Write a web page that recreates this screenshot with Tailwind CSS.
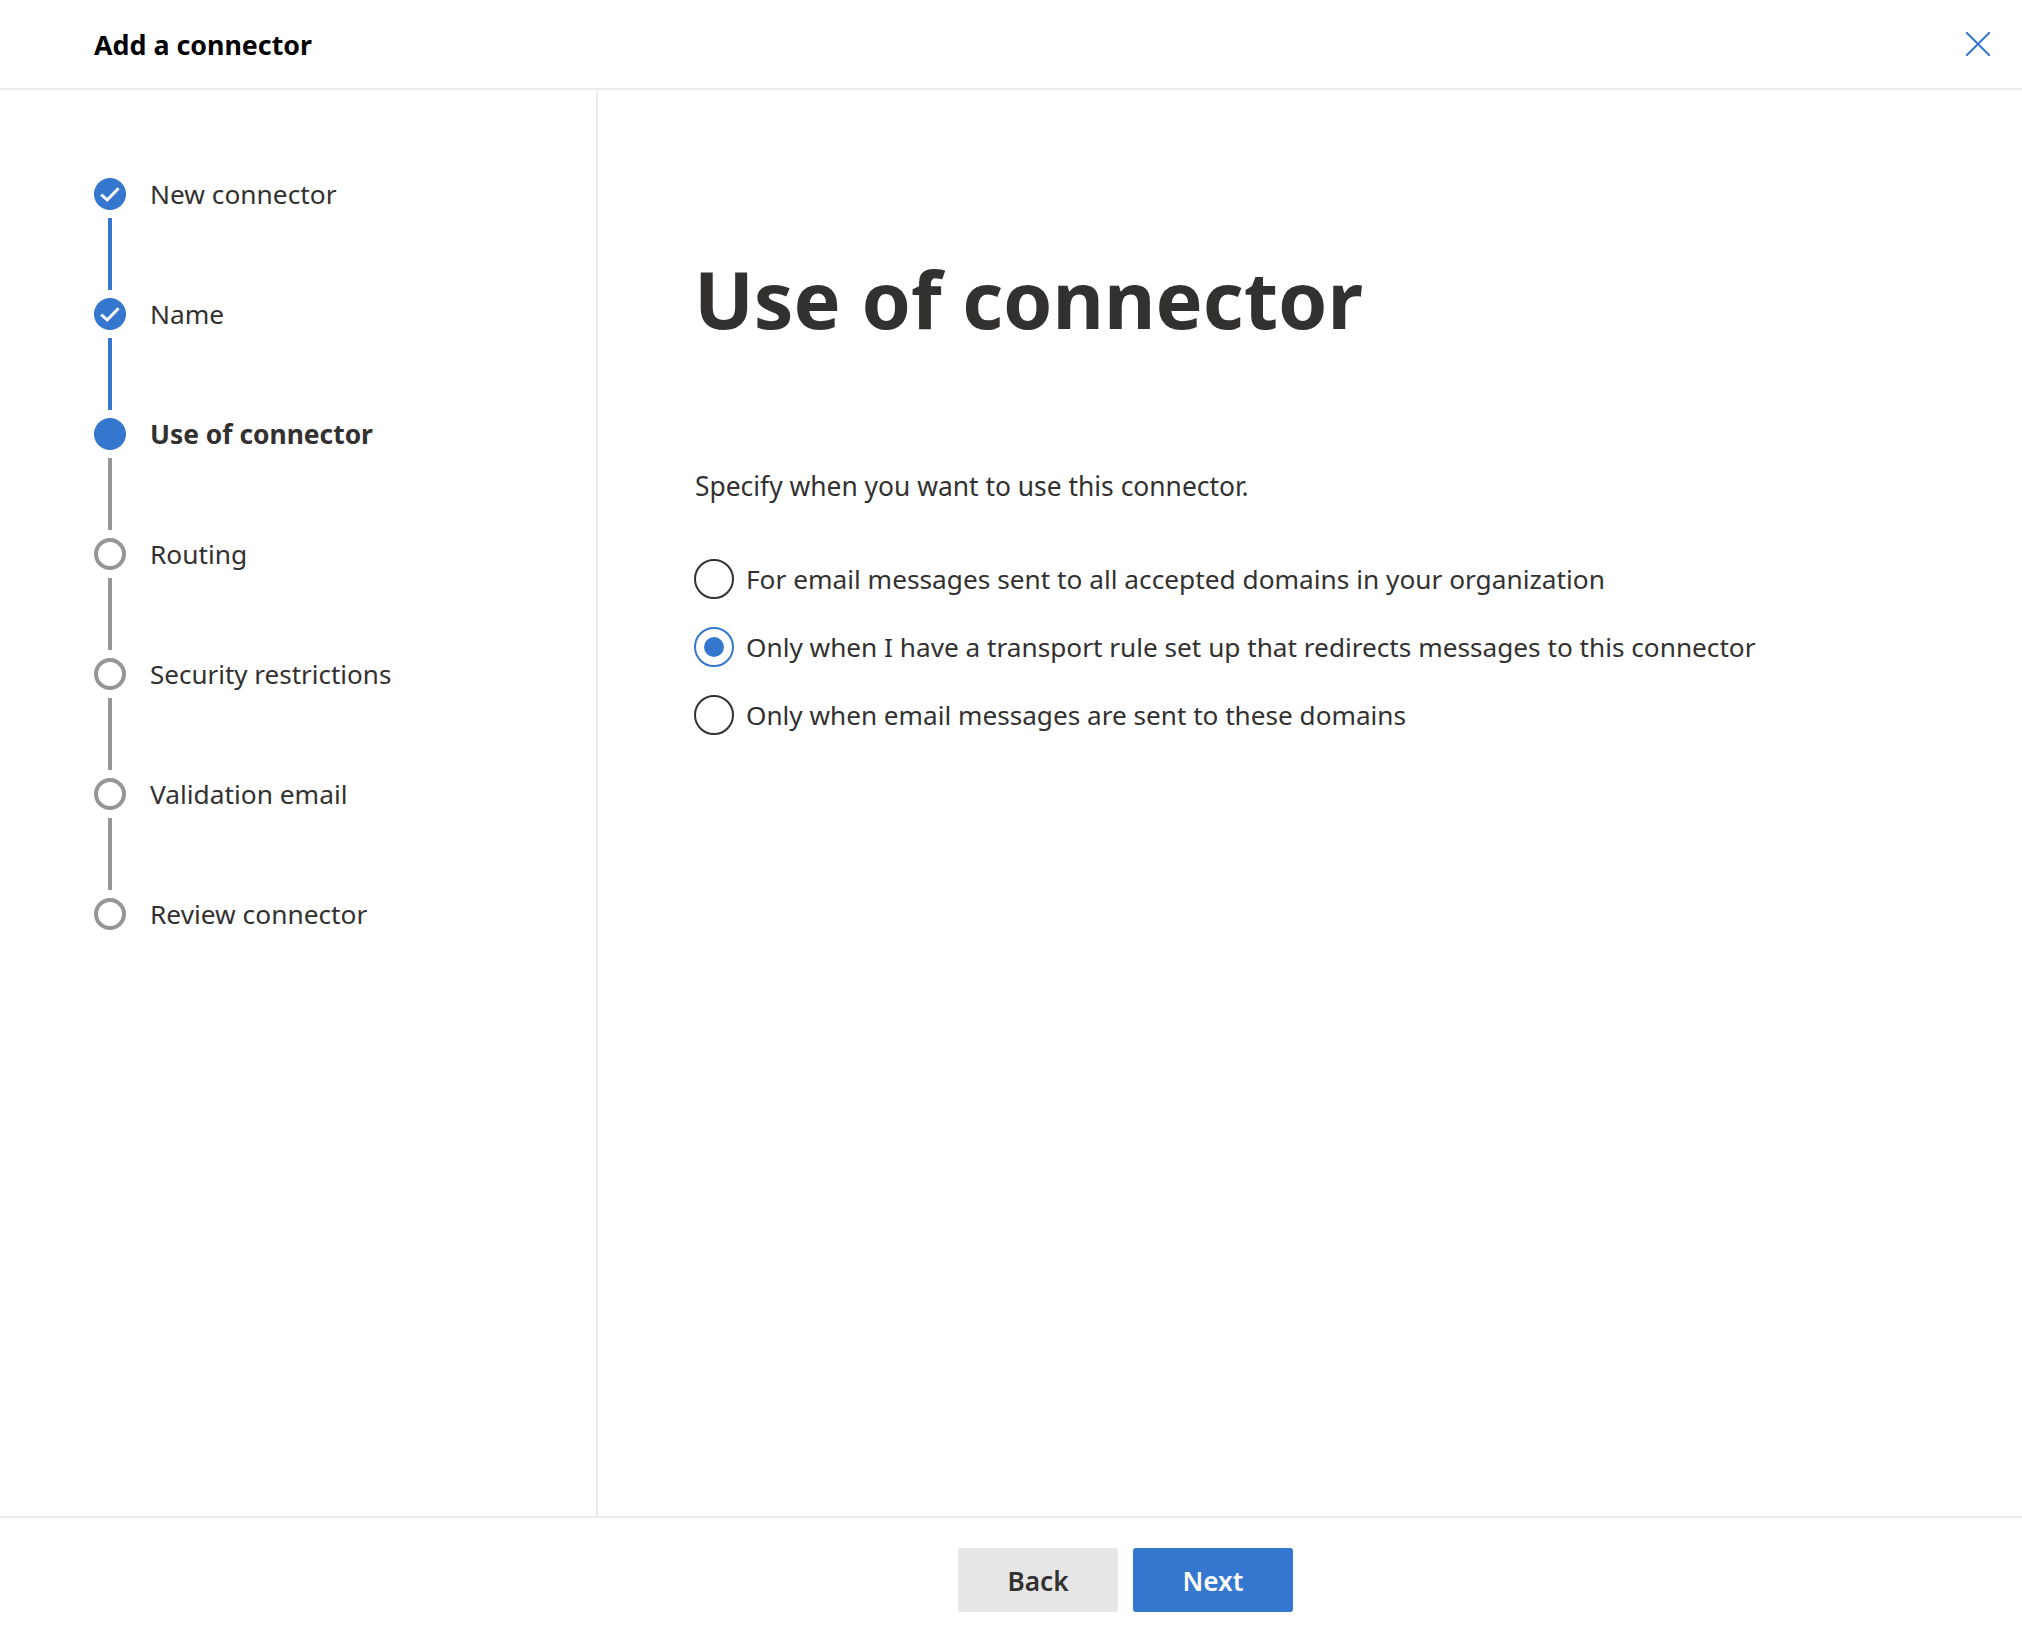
<!DOCTYPE html>
<html lang="en"><head><meta charset="utf-8"><script src="https://cdn.jsdelivr.net/npm/@tailwindcss/browser@4"></script><title>Add a connector</title></head>
<body class="m-0 bg-white">
<div class="flex flex-col w-[2022px] h-[1642px] bg-white text-[#323130] font-['Noto_Sans',sans-serif] overflow-hidden">
  <header class="flex items-center justify-between h-[90px] shrink-0 border-b-2 border-[#edebe9] pl-[94px] pr-[32px]">
    <h1 class="text-[26.8px] leading-[36px] font-bold text-black pt-[2px]">Add a connector</h1>
    <button class="block w-[24px] h-[24px]" aria-label="Close"><svg viewBox="0 0 24 24" class="w-[24px] h-[24px]" fill="none" stroke="#3576ce" stroke-width="2"><path d="M0 0L24 24M24 0L0 24"/></svg></button>
  </header>
  <div class="flex flex-1 min-h-0">
    <nav class="w-[598px] shrink-0 border-r-2 border-[#edebe9] pt-[88px] pl-[94px]">
      <ol class="flex flex-col">
        <li class="flex items-center gap-[24px] h-[32px]"><span class="w-[32px] h-[32px] rounded-full bg-[#3576ce] flex items-center justify-center"><svg viewBox="0 0 32 32" class="w-[32px] h-[32px]" fill="none" stroke="#fff" stroke-width="3"><path d="M7.2 16.6L13.2 22L24.6 10.2"/></svg></span><span class="text-[26.3px] leading-[36px]">New connector</span></li>
        <li class="w-[4px] h-[72px] my-[8px] ml-[14px] bg-[#3576ce]"></li>
        <li class="flex items-center gap-[24px] h-[32px]"><span class="w-[32px] h-[32px] rounded-full bg-[#3576ce] flex items-center justify-center"><svg viewBox="0 0 32 32" class="w-[32px] h-[32px]" fill="none" stroke="#fff" stroke-width="3"><path d="M7.2 16.6L13.2 22L24.6 10.2"/></svg></span><span class="text-[26.3px] leading-[36px]">Name</span></li>
        <li class="w-[4px] h-[72px] my-[8px] ml-[14px] bg-[#3576ce]"></li>
        <li class="flex items-center gap-[24px] h-[32px]"><span class="w-[32px] h-[32px] rounded-full bg-[#3576ce]"></span><span class="text-[26.4px] leading-[36px] font-bold">Use of connector</span></li>
        <li class="w-[4px] h-[72px] my-[8px] ml-[14px] bg-[#979593]"></li>
        <li class="flex items-center gap-[24px] h-[32px]"><span class="w-[32px] h-[32px] rounded-full border-[4.5px] border-[#979593]"></span><span class="text-[26.3px] leading-[36px]">Routing</span></li>
        <li class="w-[4px] h-[72px] my-[8px] ml-[14px] bg-[#979593]"></li>
        <li class="flex items-center gap-[24px] h-[32px]"><span class="w-[32px] h-[32px] rounded-full border-[4.5px] border-[#979593]"></span><span class="text-[26px] leading-[36px]">Security restrictions</span></li>
        <li class="w-[4px] h-[72px] my-[8px] ml-[14px] bg-[#979593]"></li>
        <li class="flex items-center gap-[24px] h-[32px]"><span class="w-[32px] h-[32px] rounded-full border-[4.5px] border-[#979593]"></span><span class="text-[26.3px] leading-[36px]">Validation email</span></li>
        <li class="w-[4px] h-[72px] my-[8px] ml-[14px] bg-[#979593]"></li>
        <li class="flex items-center gap-[24px] h-[32px]"><span class="w-[32px] h-[32px] rounded-full border-[4.5px] border-[#979593]"></span><span class="text-[26.3px] leading-[36px]">Review connector</span></li>
      </ol>
    </nav>
    <main class="flex-1 pl-[96px] pt-[148px]">
      <h2 class="text-[79.2px] leading-[120px] font-bold text-[#323130]">Use of connector</h2>
      <p class="mt-[110px] text-[26.4px] leading-[36px] pl-[1px]">Specify when you want to use this connector.</p>
      <div class="mt-[55px] flex flex-col gap-[28px]">
        <label class="flex items-center gap-[12px] h-[40px]"><span class="w-[40px] h-[40px] rounded-full border-2 border-[#323130]"></span><span class="text-[26.25px] leading-[36px]">For email messages sent to all accepted domains in your organization</span></label>
        <label class="flex items-center gap-[12px] h-[40px]"><span class="w-[40px] h-[40px] rounded-full border-2 border-[#3576ce] flex items-center justify-center"><span class="w-[20px] h-[20px] rounded-full bg-[#3576ce]"></span></span><span class="text-[26.2px] leading-[36px]">Only when I have a transport rule set up that redirects messages to this connector</span></label>
        <label class="flex items-center gap-[12px] h-[40px]"><span class="w-[40px] h-[40px] rounded-full border-2 border-[#323130]"></span><span class="text-[26.15px] leading-[36px]">Only when email messages are sent to these domains</span></label>
      </div>
    </main>
  </div>
  <footer class="h-[126px] shrink-0 border-t-2 border-[#edebe9] pt-[30px] pl-[958px] flex gap-[15px]">
    <button class="w-[160px] h-[64px] pt-[3px] rounded-[3px] bg-[#e6e6e6] text-[26.2px] font-semibold text-[#323130]">Back</button>
    <button class="w-[160px] h-[64px] pt-[3px] rounded-[3px] bg-[#3576ce] text-[26.2px] font-semibold text-white">Next</button>
  </footer>
</div>
</body></html>
